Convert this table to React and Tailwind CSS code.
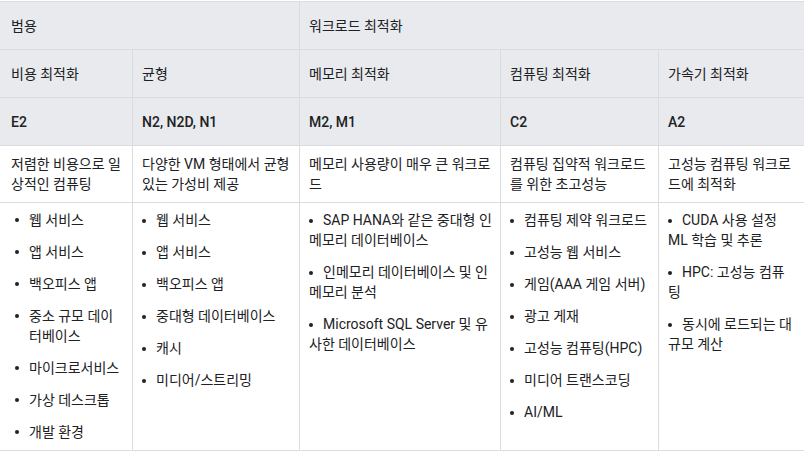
const cols = 'grid grid-cols-[133px_167px_201px_158px_145px]';

const useCases = [
  { hang: true, items: ['웹 서비스', '앱 서비스', '백오피스 앱', '중소 규모 데이터베이스', '마이크로서비스', '가상 데스크톱', '개발 환경'] },
  { items: ['웹 서비스', '앱 서비스', '백오피스 앱', '중대형 데이터베이스', '캐시', '미디어/스트리밍'] },
  { items: ['SAP HANA와 같은 중대형 인메모리 데이터베이스', '인메모리 데이터베이스 및 인메모리 분석', 'Microsoft SQL Server 및 유사한 데이터베이스'] },
  { items: ['컴퓨팅 제약 워크로드', '고성능 웹 서비스', '게임(AAA 게임 서버)', '광고 게재', '고성능 컴퓨팅(HPC)', '미디어 트랜스코딩', 'AI/ML'] },
  { items: ['CUDA 사용 설정 ML 학습 및 추론', 'HPC: 고성능 컴퓨팅', '동시에 로드되는 대규모 계산'] },
];

const families = ['비용 최적화', '균형', '메모리 최적화', '컴퓨팅 최적화', '가속기 최적화'];
const series = ['E2', 'N2, N2D, N1', 'M2, M1', 'C2', 'A2'];
const descs = [
  '저렴한 비용으로 일상적인 컴퓨팅',
  '다양한 VM 형태에서 균형 있는 가성비 제공',
  '메모리 사용량이 매우 큰 워크로드',
  '컴퓨팅 집약적 워크로드를 위한 초고성능',
  '고성능 컴퓨팅 워크로드에 최적화',
];

const pad = (i) => (i === 0 ? 'pl-[11px] pr-[9px]' : 'px-[9px]');
const listPad = ['pl-[11px] pr-[9px]', 'px-[9px]', 'pl-[9px] pr-[5px]', 'px-[9px]', 'px-[9px]'];

const Dot = () => <span className="inline-block w-[4px] h-[4px] rounded-full bg-[#202124] align-middle" />;

export default function App() {
  return (
    <div className="w-[804px] h-[451px] bg-white pt-px text-[14px] leading-[20px] text-[#202124] font-['Roboto','Noto_Sans_CJK_KR',sans-serif] overflow-hidden">
      <div className="border-t border-[#dadce0]">
        <div className={`${cols} bg-[#e8eaed]`}>
          <div className="col-span-2 h-[48px] flex items-center pl-[11px] border-b border-r border-[#dadce0]">범용</div>
          <div className="col-span-3 h-[48px] flex items-center px-[9px] border-b border-[#dadce0]">워크로드 최적화</div>
        </div>
        <div className={`${cols} bg-[#e8eaed]`}>
          {families.map((f, i) => (
            <div key={f} className={`h-[48px] flex items-center ${pad(i)} border-b border-[#dadce0] ${i < 4 ? 'border-r' : ''}`}>{f}</div>
          ))}
        </div>
        <div className={`${cols} bg-[#e8eaed]`}>
          {series.map((s, i) => (
            <div key={s} className={`h-[48px] flex items-center font-medium ${pad(i)} border-b border-[#dadce0] ${i < 4 ? 'border-r' : ''}`}>{s}</div>
          ))}
        </div>
        <div className={cols}>
          {descs.map((d, i) => (
            <div key={d} className={`py-[8px] ${pad(i)} border-b border-[#dadce0] ${i < 4 ? 'border-r' : ''}`}>{d}</div>
          ))}
        </div>
        <div className={cols}>
          {useCases.map((c, i) => (
            <ul key={i} className={`pt-[7px] pb-[8px] ${listPad[i]} flex flex-col gap-[12px] border-b border-[#dadce0] ${i < 4 ? 'border-r' : ''}`}>
              {c.items.map((it) =>
                c.hang ? (
                  <li key={it} className="flex">
                    <span className="w-[18px] shrink-0 pl-[4px] flex items-center h-[20px]"><Dot /></span>
                    <span>{it}</span>
                  </li>
                ) : (
                  <li key={it}>
                    <Dot />
                    <span className="ml-[10px]">{it}</span>
                  </li>
                )
              )}
            </ul>
          ))}
        </div>
      </div>
    </div>
  );
}
